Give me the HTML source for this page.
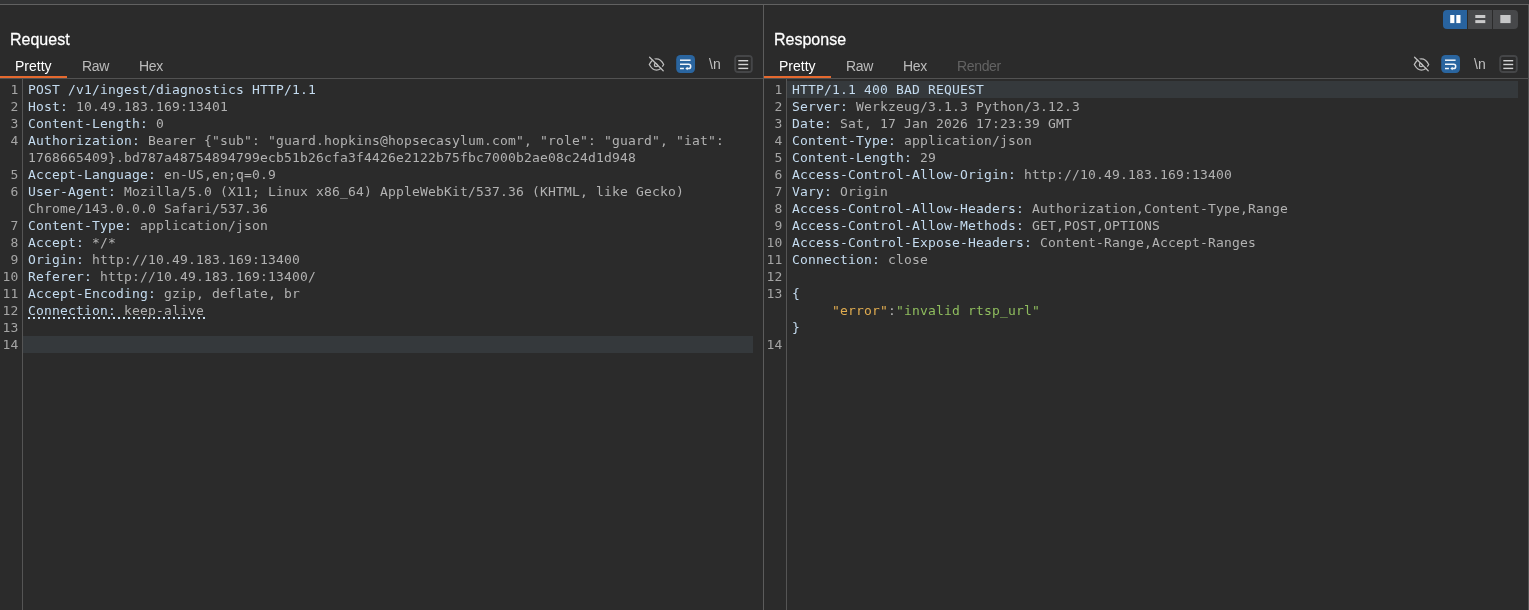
<!DOCTYPE html>
<html lang="en">
<head>
<meta charset="utf-8">
<title>Repeater</title>
<style>
html,body{margin:0;padding:0;}
body{width:1529px;height:610px;overflow:hidden;background:#2b2b2b;position:relative;font-family:"Liberation Sans",sans-serif;color:#bbbbbb;}
.abs{position:absolute;}
.code,.nums,.title,.tab{will-change:transform;}
#topstrip{left:0;top:0;width:1529px;height:4px;background:#333435;}
#topline{left:0;top:4px;width:1529px;height:1px;background:#616161;}
#vdiv{left:763px;top:5px;width:1px;height:605px;background:#5c5c5c;}
.hline{height:1px;background:#525252;top:78px;}
.title{font-size:16px;color:#ffffff;top:30px;line-height:20px;white-space:nowrap;-webkit-text-stroke:0.25px #ffffff;transform:scaleY(1.06);transform-origin:0 16px;}
.tab{font-size:14px;color:#bbbbbb;top:58px;line-height:16px;white-space:nowrap;}
.tab.sel{color:#ffffff;}
.tab.dis{color:#636363;}
.orange{height:2px;background:#e5692f;top:76px;}
.gutline{width:1px;top:79px;height:531px;background:#555555;}
.hl{background:#35393c;height:17px;}
.code{font-family:"DejaVu Sans Mono","Liberation Mono",monospace;font-size:13px;letter-spacing:0.1733px;line-height:17px;white-space:pre;color:#b2b2b2;top:81px;}
.code .n{color:#c4dbef;}
.code .k{color:#e0ac50;}
.code .s{color:#8fbd5e;}
.nums{font-family:"DejaVu Sans Mono","Liberation Mono",monospace;font-size:13px;letter-spacing:0.1733px;line-height:17px;white-space:pre;color:#a5a5a5;top:81px;text-align:right;}
.dots{height:2px;background-image:repeating-linear-gradient(to right,#c9def0 0,#c9def0 2px,transparent 2px,transparent 5px);}
.icon{position:absolute;}
.nl{font-size:14px;color:#c0c0c0;top:56px;line-height:16px;white-space:nowrap;will-change:transform;}
</style>
</head>
<body>
<div class="abs" id="topstrip"></div>
<div class="abs" id="topline"></div>
<div class="abs" id="vdiv"></div>
<div class="abs" style="left:1528px;top:5px;width:1px;height:605px;background:#565656;"></div>

<!-- Request panel -->
<div class="abs title" style="left:10px;">Request</div>
<div class="abs tab sel" style="left:15px;">Pretty</div>
<div class="abs tab" style="left:82px;letter-spacing:-0.3px;">Raw</div>
<div class="abs tab" style="left:139px;letter-spacing:-0.3px;">Hex</div>
<div class="abs orange" style="left:0;width:67px;"></div>
<div class="abs hline" style="left:0;width:763px;"></div>
<div class="abs gutline" style="left:22px;"></div>
<div class="abs hl" style="left:23px;top:336px;width:730px;"></div>
<div class="abs dots" style="left:28px;top:317px;width:177px;"></div>
<div class="abs nums" style="left:0;width:18.6px;">1
2
3
4

5
6

7
8
9
10
11
12
13
14</div>
<div class="abs code" style="left:28px;"><span class="n">POST /v1/ingest/diagnostics HTTP/1.1</span>
<span class="n">Host:</span> 10.49.183.169:13401
<span class="n">Content-Length:</span> 0
<span class="n">Authorization:</span> Bearer {"sub": "guard.hopkins@hopsecasylum.com", "role": "guard", "iat":
1768665409}.bd787a48754894799ecb51b26cfa3f4426e2122b75fbc7000b2ae08c24d1d948
<span class="n">Accept-Language:</span> en-US,en;q=0.9
<span class="n">User-Agent:</span> Mozilla/5.0 (X11; Linux x86_64) AppleWebKit/537.36 (KHTML, like Gecko)
Chrome/143.0.0.0 Safari/537.36
<span class="n">Content-Type:</span> application/json
<span class="n">Accept:</span> */*
<span class="n">Origin:</span> http://10.49.183.169:13400
<span class="n">Referer:</span> http://10.49.183.169:13400/
<span class="n">Accept-Encoding:</span> gzip, deflate, br
<span class="n">Connection:</span> keep-alive

</div>


<svg class="icon" style="left:645px;top:52px;" width="112" height="24" viewBox="645 52 112 24">
  <!-- eye-off -->
  <g fill="none" stroke="#bdbdbd" stroke-width="1.3" stroke-linecap="round" stroke-linejoin="round">
    <path d="M649.3 64.5 C651.4 60.6 654 58.9 656.5 58.9 C659 58.9 661.6 60.6 663.7 64.5 C661.6 68.4 659 70.1 656.5 70.1 C654 70.1 651.4 68.4 649.3 64.5 Z"/>
    <circle cx="656.1" cy="64.9" r="1.7"/>
  </g>
  <line x1="651" y1="56.4" x2="664.6" y2="70" stroke="#2b2b2b" stroke-width="1.6"/>
  <line x1="649.6" y1="57.2" x2="663.2" y2="70.8" stroke="#bdbdbd" stroke-width="1.3" stroke-linecap="round"/>
  <!-- wrap button -->
  <rect x="676.2" y="55" width="18.8" height="18" rx="4.2" fill="#2a659f"/>
  <g fill="none" stroke="#f2f6fa" stroke-width="1.5">
    <path d="M680 60.2 H690.6"/>
    <path d="M680 64.3 H688.6 A2.1 2.1 0 0 1 688.6 68.5 H686.8"/>
    <path d="M680 68.5 H683.9"/>
  </g>
  <path d="M685.3 68.5 L687.6 66.8 V70.2 Z" fill="#f2f6fa"/>
  <!-- menu button -->
  <rect x="734.2" y="55" width="18.6" height="18" rx="4" fill="#454648"/><rect x="736.2" y="57" width="14.6" height="14" rx="1.2" fill="#2b2b2b"/>
  <g stroke="#d2d2d2" stroke-width="1.4">
    <path d="M738.3 60.7 H748.2"/>
    <path d="M738.3 64.5 H748.2"/>
    <path d="M738.3 68.4 H748.2"/>
  </g>
</svg>
<div class="abs nl" style="left:709px;">\n</div>

<!-- Response panel -->
<div class="abs title" style="left:774px;">Response</div>
<div class="abs tab sel" style="left:779px;">Pretty</div>
<div class="abs tab" style="left:846px;letter-spacing:-0.3px;">Raw</div>
<div class="abs tab" style="left:903px;letter-spacing:-0.3px;">Hex</div>
<div class="abs tab dis" style="left:957px;letter-spacing:-0.35px;">Render</div>
<div class="abs orange" style="left:764px;width:67px;"></div>
<div class="abs hline" style="left:764px;width:765px;"></div>
<div class="abs gutline" style="left:786px;"></div>
<div class="abs hl" style="left:787px;top:81px;width:731px;"></div>
<div class="abs nums" style="left:764px;width:18.6px;">1
2
3
4
5
6
7
8
9
10
11
12
13


14</div>
<div class="abs code" style="left:792px;"><span class="n">HTTP/1.1 400 BAD REQUEST</span>
<span class="n">Server:</span> Werkzeug/3.1.3 Python/3.12.3
<span class="n">Date:</span> Sat, 17 Jan 2026 17:23:39 GMT
<span class="n">Content-Type:</span> application/json
<span class="n">Content-Length:</span> 29
<span class="n">Access-Control-Allow-Origin:</span> http://10.49.183.169:13400
<span class="n">Vary:</span> Origin
<span class="n">Access-Control-Allow-Headers:</span> Authorization,Content-Type,Range
<span class="n">Access-Control-Allow-Methods:</span> GET,POST,OPTIONS
<span class="n">Access-Control-Expose-Headers:</span> Content-Range,Accept-Ranges
<span class="n">Connection:</span> close

<span class="n">{</span>
     <span class="k">"error"</span>:<span class="s">"invalid rtsp_url"</span>
<span class="n">}</span>
</div>


<svg class="icon" style="left:1410px;top:52px;" width="112" height="24" viewBox="645 52 112 24">
  <!-- eye-off -->
  <g fill="none" stroke="#bdbdbd" stroke-width="1.3" stroke-linecap="round" stroke-linejoin="round">
    <path d="M649.3 64.5 C651.4 60.6 654 58.9 656.5 58.9 C659 58.9 661.6 60.6 663.7 64.5 C661.6 68.4 659 70.1 656.5 70.1 C654 70.1 651.4 68.4 649.3 64.5 Z"/>
    <circle cx="656.1" cy="64.9" r="1.7"/>
  </g>
  <line x1="651" y1="56.4" x2="664.6" y2="70" stroke="#2b2b2b" stroke-width="1.6"/>
  <line x1="649.6" y1="57.2" x2="663.2" y2="70.8" stroke="#bdbdbd" stroke-width="1.3" stroke-linecap="round"/>
  <!-- wrap button -->
  <rect x="676.2" y="55" width="18.8" height="18" rx="4.2" fill="#2a659f"/>
  <g fill="none" stroke="#f2f6fa" stroke-width="1.5">
    <path d="M680 60.2 H690.6"/>
    <path d="M680 64.3 H688.6 A2.1 2.1 0 0 1 688.6 68.5 H686.8"/>
    <path d="M680 68.5 H683.9"/>
  </g>
  <path d="M685.3 68.5 L687.6 66.8 V70.2 Z" fill="#f2f6fa"/>
  <!-- menu button -->
  <rect x="734.2" y="55" width="18.6" height="18" rx="4" fill="#454648"/><rect x="736.2" y="57" width="14.6" height="14" rx="1.2" fill="#2b2b2b"/>
  <g stroke="#d2d2d2" stroke-width="1.4">
    <path d="M738.3 60.7 H748.2"/>
    <path d="M738.3 64.5 H748.2"/>
    <path d="M738.3 68.4 H748.2"/>
  </g>
</svg>
<div class="abs nl" style="left:1474px;">\n</div>
<svg class="icon" style="left:1440px;top:8px;" width="82" height="24" viewBox="1440 8 82 24">
  <path d="M1447 10 H1467 V29 H1447 A4 4 0 0 1 1443 25 V14 A4 4 0 0 1 1447 10 Z" fill="#28639f"/>
  <rect x="1468" y="10" width="24" height="19" fill="#47484a"/>
  <path d="M1493 10 H1514 A4 4 0 0 1 1518 14 V25 A4 4 0 0 1 1514 29 H1493 Z" fill="#47484a"/>
  <rect x="1450.2" y="15" width="4.2" height="8.1" fill="#ffffff"/>
  <rect x="1456.3" y="15" width="4.2" height="8.1" fill="#ffffff"/>
  <rect x="1475.3" y="15" width="10" height="3" fill="#c9c9ca"/>
  <rect x="1475.3" y="20.1" width="10" height="3" fill="#c9c9ca"/>
  <rect x="1500.3" y="15" width="10.3" height="8.1" fill="#c6c7c8"/>
</svg>
</body>
</html>
